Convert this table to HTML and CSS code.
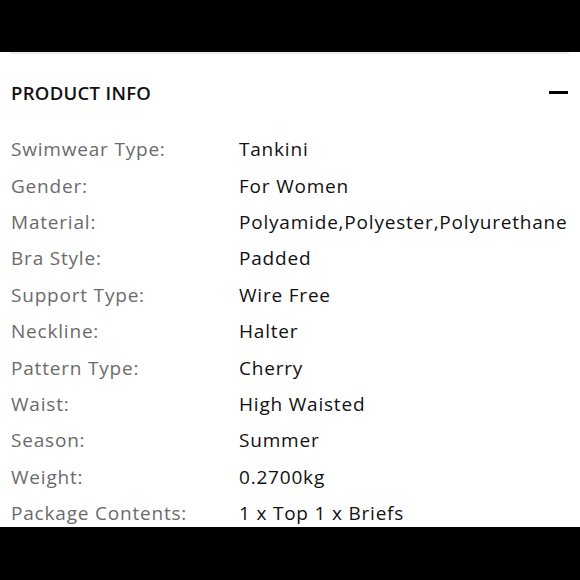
FILE: index.html
```html
<!DOCTYPE html>
<html>
<head>
<meta charset="utf-8">
<link rel="stylesheet" href="styles.css">
</head>
<body>
<div class="topbar"></div>
<section class="panel">
  <div class="divider"></div>
  <div class="head">
    <h2 class="title">PRODUCT INFO</h2>
    <span class="minus"></span>
  </div>
  <dl class="specs">
    <div class="row"><dt>Swimwear Type:</dt><dd>Tankini</dd></div>
    <div class="row"><dt>Gender:</dt><dd>For Women</dd></div>
    <div class="row"><dt>Material:</dt><dd>Polyamide,Polyester,Polyurethane</dd></div>
    <div class="row"><dt>Bra Style:</dt><dd>Padded</dd></div>
    <div class="row"><dt>Support Type:</dt><dd>Wire Free</dd></div>
    <div class="row"><dt>Neckline:</dt><dd>Halter</dd></div>
    <div class="row"><dt>Pattern Type:</dt><dd>Cherry</dd></div>
    <div class="row"><dt>Waist:</dt><dd>High Waisted</dd></div>
    <div class="row"><dt>Season:</dt><dd>Summer</dd></div>
    <div class="row"><dt>Weight:</dt><dd>0.2700kg</dd></div>
    <div class="row"><dt>Package Contents:</dt><dd>1 x Top 1 x Briefs</dd></div>
  </dl>
</section>
<div class="bottombar"></div>
</body>
</html>
```
FILE: styles.css
```css
html, body {
  margin: 0;
  padding: 0;
  background: #000;
  width: 580px;
  height: 580px;
  overflow: hidden;
  font-family: "Open Sans", "Noto Sans", sans-serif;
}
.topbar {
  height: 52px;
  background: #000;
}
.panel {
  background: #fff;
  height: 475px;
  overflow: hidden;
  padding: 0 11px;
  box-sizing: border-box;
}
.divider {
  height: 2px;
  margin: 0 0 0 -1px;
  background: #ececec;
}
.head {
  display: flex;
  align-items: center;
  justify-content: space-between;
  height: 76px;
}
.title {
  margin: 0;
  font-size: 18.5px;
  font-weight: 600;
  color: #111;
  letter-spacing: 0.3px;
  padding-top: 1px;
}
.minus {
  width: 19px;
  height: 3px;
  background: #000;
  margin-right: 1px;
}
.specs {
  margin: 0;
  padding-top: 1px;
}
.row {
  display: flex;
  height: 36.4px;
  align-items: center;
  font-size: 19px;
  letter-spacing: 0.8px;
}
dt {
  width: 228px;
  color: #6b6b6b;
}
dd {
  margin: 0;
  color: #111;
}
```
